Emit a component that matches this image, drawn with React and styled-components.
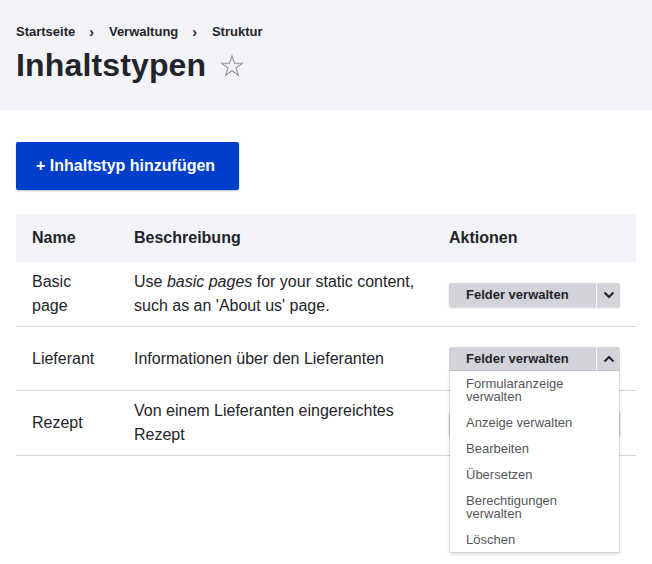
import React from "react";
import styled, { createGlobalStyle } from "styled-components";

const Global = createGlobalStyle`
  * { box-sizing: border-box; }
  html, body { margin: 0; padding: 0; background: #fff; }
  body {
    font-family: "Liberation Sans", Arial, sans-serif;
    color: #232429;
    font-size: 16px;
    line-height: 1.5;
    min-height: 564px;
  }
`;

const Header = styled.header`
  background: #f3f4f9;
  padding: 24px 16px 25px;
`;

const Breadcrumb = styled.nav`
  display: flex;
  align-items: center;
  font-size: 13px;
  font-weight: 700;
  line-height: 16px;
  color: #232429;
`;

const Sep = styled.span`
  padding: 0 15px 0 14px;
  font-size: 14px;
`;

const TitleRow = styled.div`
  display: flex;
  align-items: center;
  margin-top: 5px;
  height: 40px;
`;

const Title = styled.h1`
  margin: 0;
  font-size: 32px;
  line-height: 40px;
  font-weight: 700;
  color: #232429;
  letter-spacing: 0.15px;
`;

const Star = styled.svg`
  margin-left: 14px;
  margin-top: 2px;
  width: 24px;
  height: 24px;
`;

const Main = styled.main`
  padding: 32px 16px 120px;
`;

const PrimaryButton = styled.button`
  display: inline-flex;
  align-items: center;
  height: 48px;
  padding: 0 24px 0 20px;
  border: 0;
  border-radius: 2px;
  background: #003ecc;
  color: #fff;
  font-family: inherit;
  font-size: 16px;
  font-weight: 700;
  box-shadow: 0 1px 2px rgba(0, 0, 0, 0.25);
`;

const Table = styled.table`
  margin-top: 24px;
  width: 620px;
  border-collapse: collapse;
  table-layout: fixed;
`;

const Th = styled.th`
  background: #f3f4f9;
  text-align: left;
  font-weight: 700;
  height: 48px;
  padding: 0 16px;
  line-height: 24px;
`;

const Tr = styled.tr`
  height: 64px;
  border-bottom: 1px solid #d4d4d8;
`;

const Td = styled.td`
  padding: 8px 16px;
  vertical-align: middle;
  line-height: 24px;
`;

const Drop = styled.div`
  position: relative;
  display: inline-flex;
  height: 24px;
  border-radius: ${(p) => (p.$open ? "2px 2px 0 0" : "2px")};
  background: #d3d4d9;
  box-shadow: ${(p) => (p.$open ? "none" : "0 1px 2px rgba(0,0,0,0.18)")};
`;

const DropMain = styled.span`
  display: flex;
  align-items: center;
  padding: 0 24px 0 17px;
  width: 147px;
  font-size: 13px;
  font-weight: 700;
  line-height: 24px;
  color: #232429;
  white-space: nowrap;
`;

const DropToggle = styled.span`
  display: flex;
  align-items: center;
  justify-content: center;
  width: 24px;
  border-left: 1px solid #f3f4f9;
`;

const Menu = styled.ul`
  position: absolute;
  z-index: 5;
  top: 24px;
  left: 1px;
  right: 1px;
  margin: 0;
  padding: 0;
  list-style: none;
  background: #fff;
  box-shadow: 0 0 0 1px rgba(0, 0, 0, 0.07), 0 2px 4px rgba(0, 0, 0, 0.16);
`;

const MenuItem = styled.li`
  padding: 6.5px 16px;
  font-size: 13px;
  line-height: 13px;
  color: #55565b;
  &:first-child { padding-top: 5.5px; }
`;

function Chevron({ up }) {
  return (
    <svg width="12" height="8" viewBox="0 0 12 8">
      <path
        d={up ? "M1.5 6.5 L6 2 L10.5 6.5" : "M1.5 1.5 L6 6 L10.5 1.5"}
        fill="none"
        stroke="#222330"
        strokeWidth="2"
      />
    </svg>
  );
}

function Dropbutton({ open }) {
  return (
    <Drop $open={open}>
      <DropMain>Felder verwalten</DropMain>
      <DropToggle>
        <Chevron up={open} />
      </DropToggle>
      {open && (
        <Menu>
          <MenuItem>Formularanzeige verwalten</MenuItem>
          <MenuItem>Anzeige verwalten</MenuItem>
          <MenuItem>Bearbeiten</MenuItem>
          <MenuItem>Übersetzen</MenuItem>
          <MenuItem>Berechtigungen verwalten</MenuItem>
          <MenuItem>Löschen</MenuItem>
        </Menu>
      )}
    </Drop>
  );
}

export default function App() {
  return (
    <>
      <Global />
      <Header>
        <Breadcrumb>
          <span>Startseite</span>
          <Sep>›</Sep>
          <span>Verwaltung</span>
          <Sep>›</Sep>
          <span>Struktur</span>
        </Breadcrumb>
        <TitleRow>
          <Title>Inhaltstypen</Title>
          <Star viewBox="0 0 24 24">
            <path
              d="M12 1.8 L14.5 9.3 L22.4 9.3 L16 13.9 L18.4 21.4 L12 16.8 L5.6 21.4 L8 13.9 L1.6 9.3 L9.5 9.3 Z"
              fill="none"
              stroke="#8e9095"
              strokeWidth="1.1"
              strokeLinejoin="miter"
            />
          </Star>
        </TitleRow>
      </Header>
      <Main>
        <PrimaryButton>+ Inhaltstyp hinzufügen</PrimaryButton>
        <Table>
          <colgroup>
            <col style={{ width: 102 }} />
            <col style={{ width: 315 }} />
            <col style={{ width: 203 }} />
          </colgroup>
          <thead>
            <tr>
              <Th>Name</Th>
              <Th>Beschreibung</Th>
              <Th>Aktionen</Th>
            </tr>
          </thead>
          <tbody>
            <Tr>
              <Td>Basic page</Td>
              <Td>
                Use <em>basic pages</em> for your static content, such as an
                'About us' page.
              </Td>
              <Td>
                <Dropbutton />
              </Td>
            </Tr>
            <Tr>
              <Td>Lieferant</Td>
              <Td>Informationen über den Lieferanten</Td>
              <Td>
                <Dropbutton open />
              </Td>
            </Tr>
            <Tr>
              <Td>Rezept</Td>
              <Td>Von einem Lieferanten eingereichtes Rezept</Td>
              <Td>
                <Dropbutton />
              </Td>
            </Tr>
          </tbody>
        </Table>
      </Main>
    </>
  );
}
